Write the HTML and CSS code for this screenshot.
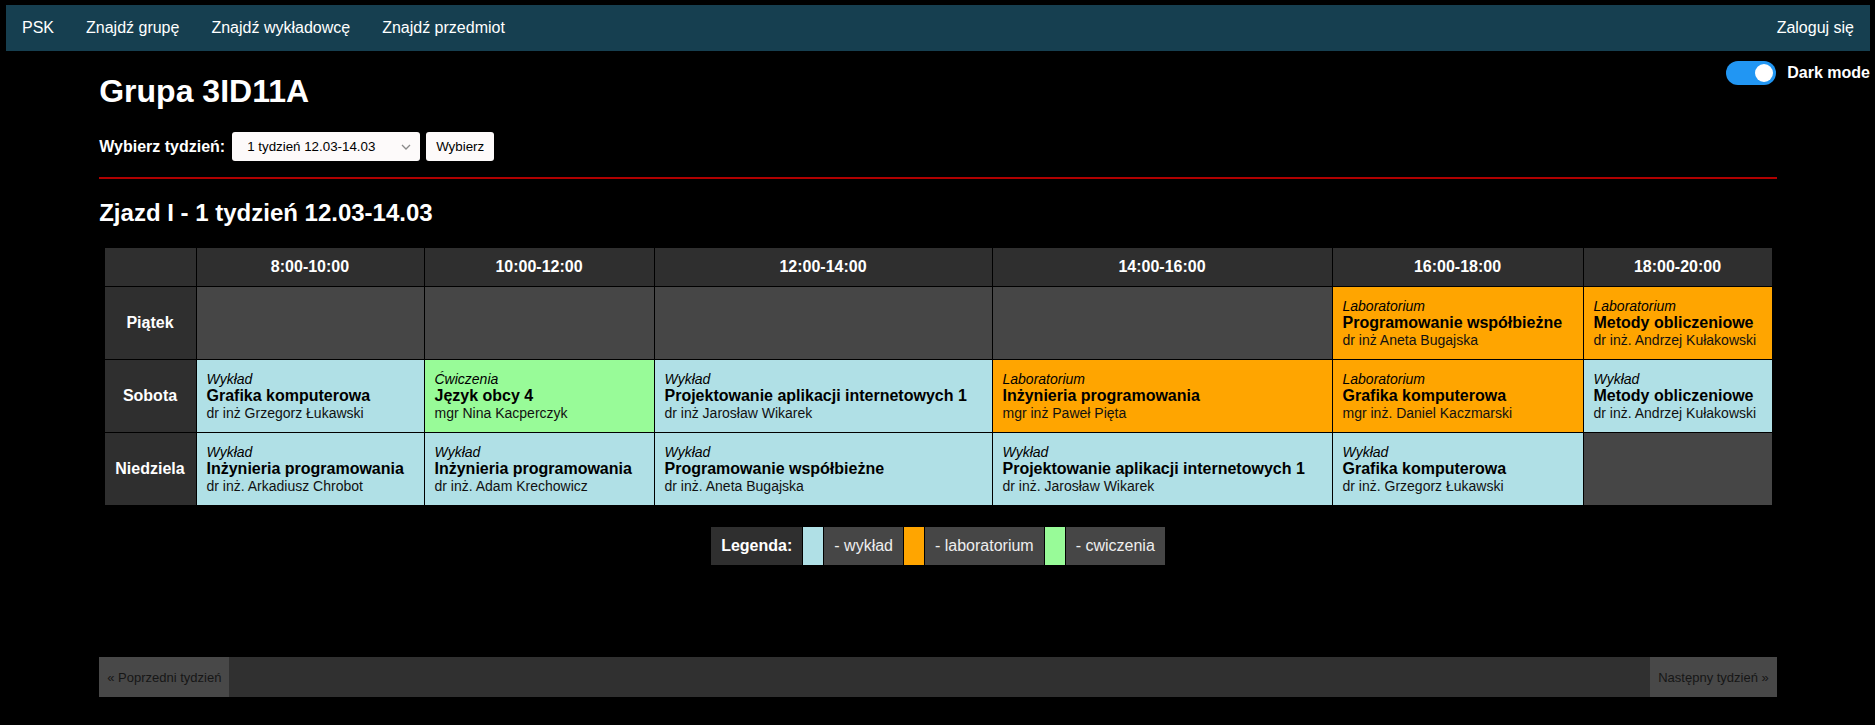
FILE: index.html
```html
<!DOCTYPE html>
<html lang="pl">
<head>
<meta charset="utf-8">
<title>Grupa 3ID11A</title>
<link rel="stylesheet" href="styles.css">
</head>
<body>
<nav class="nav">
  <a href="#" class="nav-link">PSK</a>
  <a href="#" class="nav-link">Znajdź grupę</a>
  <a href="#" class="nav-link">Znajdź wykładowcę</a>
  <a href="#" class="nav-link">Znajdź przedmiot</a>
  <a href="#" class="nav-link nav-right">Zaloguj się</a>
</nav>

<div class="dark-mode">
  <span class="toggle"><span class="knob"></span></span>
  <span class="dark-label">Dark mode</span>
</div>

<main class="container">
  <h1 class="title">Grupa 3ID11A</h1>
  <form class="week-form">
    <label class="week-label">Wybierz tydzień:</label>
    <span class="select-wrap">
      <select class="week-select"><option>1 tydzień 12.03-14.03</option></select>
      <svg class="chevron" width="10" height="6" viewBox="0 0 10 6"><polyline points="1,1 5,5 9,1" fill="none" stroke="#8a8a8a" stroke-width="1.3"/></svg>
    </span>
    <button type="button" class="week-btn">Wybierz</button>
  </form>
  <hr class="divider">
  <h2 class="subtitle">Zjazd I - 1 tydzień 12.03-14.03</h2>

  <table class="plan">
    <colgroup>
      <col class="col-day">
      <col class="col-1">
      <col class="col-2">
      <col class="col-3">
      <col class="col-4">
      <col class="col-5">
      <col class="col-6">
    </colgroup>
    <thead>
      <tr>
        <th class="corner"></th>
        <th>8:00-10:00</th>
        <th>10:00-12:00</th>
        <th>12:00-14:00</th>
        <th>14:00-16:00</th>
        <th>16:00-18:00</th>
        <th>18:00-20:00</th>
      </tr>
    </thead>
    <tbody>
      <tr>
        <th class="day">Piątek</th>
        <td class="empty"></td>
        <td class="empty"></td>
        <td class="empty"></td>
        <td class="empty"></td>
        <td class="lab"><span class="kind">Laboratorium</span><span class="subj">Programowanie współbieżne</span><span class="teacher">dr inż Aneta Bugajska</span></td>
        <td class="lab"><span class="kind">Laboratorium</span><span class="subj">Metody obliczeniowe</span><span class="teacher">dr inż. Andrzej Kułakowski</span></td>
      </tr>
      <tr>
        <th class="day">Sobota</th>
        <td class="wyk"><span class="kind">Wykład</span><span class="subj">Grafika komputerowa</span><span class="teacher">dr inż Grzegorz Łukawski</span></td>
        <td class="cw"><span class="kind">Ćwiczenia</span><span class="subj">Język obcy 4</span><span class="teacher">mgr Nina Kacperczyk</span></td>
        <td class="wyk"><span class="kind">Wykład</span><span class="subj">Projektowanie aplikacji internetowych 1</span><span class="teacher">dr inż Jarosław Wikarek</span></td>
        <td class="lab"><span class="kind">Laboratorium</span><span class="subj">Inżynieria programowania</span><span class="teacher">mgr inż Paweł Pięta</span></td>
        <td class="lab"><span class="kind">Laboratorium</span><span class="subj">Grafika komputerowa</span><span class="teacher">mgr inż. Daniel Kaczmarski</span></td>
        <td class="wyk"><span class="kind">Wykład</span><span class="subj">Metody obliczeniowe</span><span class="teacher">dr inż. Andrzej Kułakowski</span></td>
      </tr>
      <tr>
        <th class="day">Niedziela</th>
        <td class="wyk"><span class="kind">Wykład</span><span class="subj">Inżynieria programowania</span><span class="teacher">dr inż. Arkadiusz Chrobot</span></td>
        <td class="wyk"><span class="kind">Wykład</span><span class="subj">Inżynieria programowania</span><span class="teacher">dr inż. Adam Krechowicz</span></td>
        <td class="wyk"><span class="kind">Wykład</span><span class="subj">Programowanie współbieżne</span><span class="teacher">dr inż. Aneta Bugajska</span></td>
        <td class="wyk"><span class="kind">Wykład</span><span class="subj">Projektowanie aplikacji internetowych 1</span><span class="teacher">dr inż. Jarosław Wikarek</span></td>
        <td class="wyk"><span class="kind">Wykład</span><span class="subj">Grafika komputerowa</span><span class="teacher">dr inż. Grzegorz Łukawski</span></td>
        <td class="empty"></td>
      </tr>
    </tbody>
  </table>

  <table class="legend">
    <tr>
      <td class="legend-title">Legenda:</td>
      <td class="swatch wyk"></td>
      <td class="legend-text">- wykład</td>
      <td class="swatch lab"></td>
      <td class="legend-text">- laboratorium</td>
      <td class="swatch cw"></td>
      <td class="legend-text">- cwiczenia</td>
    </tr>
  </table>

  <div class="pager">
    <a href="#" class="pager-link">« Poprzedni tydzień</a>
    <a href="#" class="pager-link">Następny tydzień »</a>
  </div>
</main>
</body>
</html>
```

FILE: styles.css
```css
html, body {
  background: #000;
}

body {
  margin: 5px 5px 0 6px;
  color: #fff;
  font-family: "Liberation Sans", Arial, sans-serif;
  font-size: 16px;
}

.nav {
  display: flex;
  background: #163f50;
}

.nav-link {
  color: #fff;
  text-decoration: none;
  padding: 14px 16px;
  font-size: 16px;
  line-height: 18px;
}

.nav-right {
  margin-left: auto;
}

.dark-mode {
  position: absolute;
  top: 61px;
  right: 5px;
  display: flex;
  align-items: center;
  gap: 11px;
}

.toggle {
  width: 50px;
  height: 24px;
  border-radius: 12px;
  background: #2196f3;
  display: flex;
  align-items: center;
  justify-content: flex-end;
  padding: 0 3px;
  box-sizing: border-box;
}

.knob {
  width: 18px;
  height: 18px;
  border-radius: 50%;
  background: #fff;
}

.dark-label {
  font-weight: bold;
  font-size: 16px;
}

.container {
  width: 90%;
  margin: 0 auto;
}

.title {
  font-size: 32px;
  line-height: 37px;
  margin: 22px 0 22px;
}

.week-form {
  display: flex;
  align-items: center;
  margin: 0;
  height: 29px;
}

.week-label {
  font-weight: bold;
  font-size: 16px;
  margin-right: 7px;
}

.select-wrap {
  position: relative;
  display: flex;
  margin-right: 6px;
}

.week-select {
  appearance: none;
  -webkit-appearance: none;
  width: 188px;
  height: 29px;
  border: none;
  border-radius: 3px;
  background: #fdfafa;
  color: #000;
  font-family: "Liberation Sans", Arial, sans-serif;
  font-size: 13.33px;
  padding: 0 0 0 15px;
  margin: 0;
}

.chevron {
  position: absolute;
  right: 9px;
  top: 12px;
}

.week-btn {
  height: 29px;
  border: none;
  border-radius: 3px;
  background: #fdfafa;
  color: #000;
  font-family: "Liberation Sans", Arial, sans-serif;
  font-size: 13.33px;
  padding: 0 10px;
  margin: 0;
}

.divider {
  border: 0;
  border-top: 2px solid #b00000;
  margin: 16px 0 0;
  height: 0;
}

.subtitle {
  font-size: 24px;
  line-height: 28px;
  margin: 20px 0;
}

.plan {
  border-collapse: collapse;
  table-layout: fixed;
  width: 1668px;
  margin: 3px auto 0;
}

.col-day { width: 92px; }
.col-1 { width: 228px; }
.col-2 { width: 230px; }
.col-3 { width: 338px; }
.col-4 { width: 340px; }
.col-5 { width: 251px; }
.col-6 { width: 189px; }

.plan th,
.plan td {
  border: 1px solid #000;
}

.plan th {
  background: #2f2f2f;
  color: #fff;
  font-size: 16px;
  font-weight: bold;
  text-align: center;
  padding: 10px 0;
}

.plan td {
  padding: 11px 9px 11px 10px;
  color: #000;
  text-align: left;
  vertical-align: middle;
  white-space: nowrap;
}

.plan .day {
  padding: 10px 0;
}

.empty {
  background: #464646;
}

.wyk {
  background: #b0e0e6;
}

.lab {
  background: #ffa500;
}

.cw {
  background: #98fb98;
}

.kind {
  display: block;
  font-style: italic;
  font-size: 14px;
}

.subj {
  display: block;
  font-weight: bold;
  font-size: 16px;
}

.teacher {
  display: block;
  font-size: 14px;
  color: #111;
}

.legend {
  border-collapse: collapse;
  margin: 20px auto 0;
}

.legend td {
  border: 1px solid #000;
  padding: 10px;
  font-size: 16px;
  color: #eee;
}

.legend .legend-title {
  background: #2f2f2f;
  font-weight: bold;
  color: #fff;
}

.legend .legend-text {
  background: #464646;
}

.legend .swatch {
  padding: 10px;
}

.pager {
  display: flex;
  justify-content: space-between;
  background: #303030;
  height: 40px;
  margin-top: 91px;
}

.pager-link {
  display: flex;
  align-items: center;
  background: #484848;
  color: #161616;
  text-decoration: none;
  font-size: 13px;
  padding: 0 8px;
}
```
